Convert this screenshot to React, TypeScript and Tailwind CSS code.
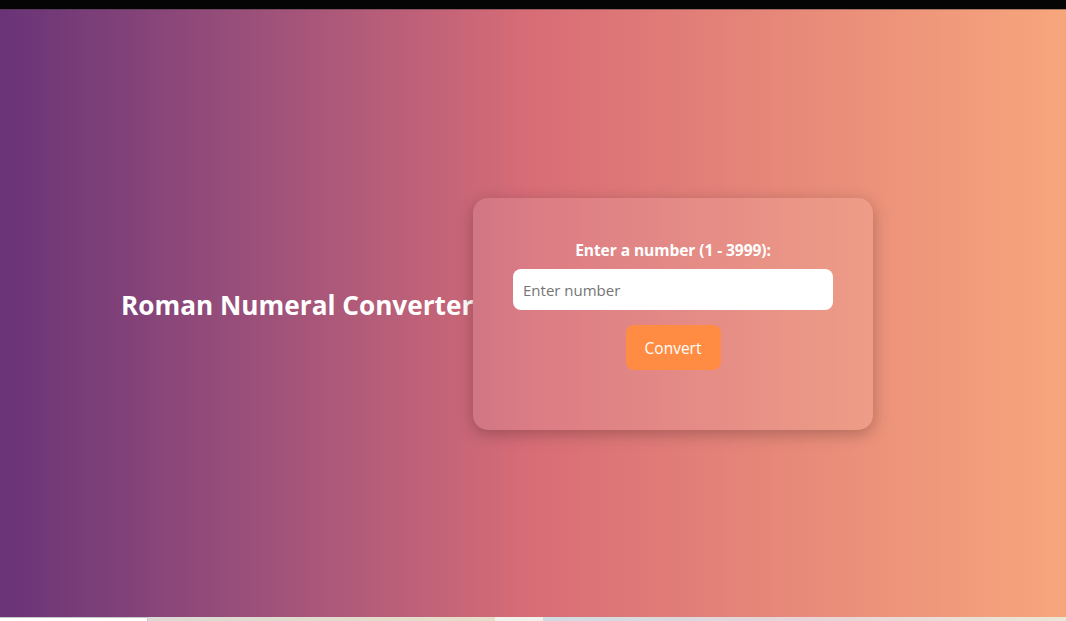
import React from "react";

export default function App() {
  return (
    <div className="h-[621px] w-[1066px] overflow-hidden flex flex-col" style={{ fontFamily: '"Open Sans", "Noto Sans", sans-serif' }}>
      <div className="h-[9px] bg-[#050505] shrink-0" />
      <div className="h-[608px] shrink-0 flex items-center bg-gradient-to-r from-[#693377] via-[#d86d76] to-[#f7a67c] border-t border-[#3a3a3a]/40">
        <h1 className="ml-[121px] w-[352px] whitespace-nowrap text-white font-bold text-[26.2px] leading-[32px] mb-[17px]">
          Roman Numeral Converter
        </h1>
        <div className="w-[400px] h-[232px] rounded-[15px] bg-white/10 shadow-[0_4px_16px_rgba(0,0,0,0.25)] flex flex-col items-center pt-[42px] px-[40px]">
          <label className="text-white font-bold text-[15.6px] leading-[20px] mb-[9px] tracking-[-0.1px]">Enter a number (1 - 3999):</label>
          <input
            type="text"
            placeholder="Enter number"
            className="w-[320px] h-[41px] rounded-[8px] bg-white px-[10px] pt-[1px] text-[15px] text-[#333] placeholder:text-[#757575] outline-none border-0"
          />
          <button className="mt-[15px] w-[95px] h-[45px] rounded-[8px] bg-[#ff8c42] text-white text-[15.5px] pt-[3px]">
            Convert
          </button>
        </div>
      </div>
      <div className="h-[4px] shrink-0 flex">
        <div className="w-[148px] bg-white border-t border-r border-[#c8c8c8]" />
        <div className="w-[347px] bg-gradient-to-r from-[#dcdad4] to-[#e8ddc8]" />
        <div className="w-[48px] bg-[#f2f2ec]" />
        <div className="flex-1 bg-gradient-to-r from-[#cfdde2] via-[#e8d4d8] to-[#ece6d6]" />
      </div>
    </div>
  );
}
